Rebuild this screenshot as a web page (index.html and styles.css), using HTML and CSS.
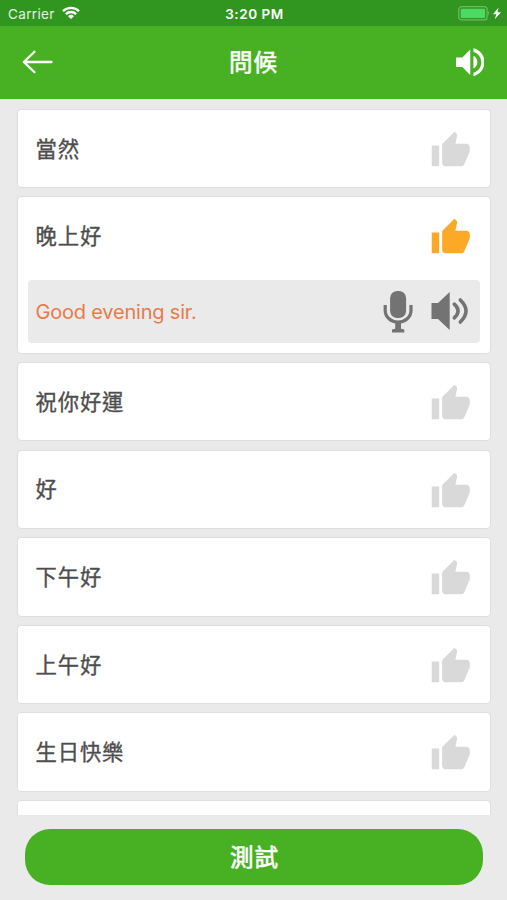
FILE: index.html
```html
<!DOCTYPE html>
<html lang="zh-Hant">
<head>
<meta charset="utf-8">
<meta name="viewport" content="width=device-width, initial-scale=1">
<title>問候</title>
<link rel="stylesheet" href="styles.css">
</head>
<body>
<svg class="defs" aria-hidden="true">
  <symbol id="thumb" viewBox="0 0 24 24"><path d="M1 21h4.300V9H1v12zm22-11c0-1.100-.9-2-2-2h-6.310l.95-4.570.03-.32c0-.41-.17-.79-.44-1.060L14.170 1 7.590 7.590C7.220 7.950 7 8.450 7 9v10c0 1.100.9 2 2 2h9c.83 0 1.540-.5 1.840-1.220l3.020-7.050c.09-.23.14-.47.14-.73z"/></symbol>
</svg>
<div class="screen">
  <div class="status">
    <div class="status-left">
      <span class="carrier">Carrier</span>
      <svg class="wifi" viewBox="0 0 18 13"><g fill="none" stroke="#fff" stroke-width="2.300"><path d="M1 5.200a11.500 11.500 0 0 1 16 0"/><path d="M3.900 8.100a7.300 7.300 0 0 1 10.200 0"/></g><path fill="#fff" d="M6 10.200a4.400 4.400 0 0 1 6 0L9 13z"/></svg>
    </div>
    <span class="clock">3:20 PM</span>
    <div class="status-right">
      <svg class="battery" viewBox="0 0 44 16"><rect x=".7" y="1.700" width="28.400" height="13.200" rx="3" fill="none" stroke="#72b967" stroke-width="1.200"/><rect x="2.700" y="3.700" width="24.400" height="9.200" rx="1.200" fill="#4cd964"/><path d="M30.200 6q2 2.300 0 4.600z" fill="#72b967"/><path d="M40.600 2.600 35 9.300h3.300L36.800 14.200l6.200-7h-3.500z" fill="#fff"/></svg>
    </div>
  </div>
  <header class="header">
    <svg class="back" viewBox="0 0 32 24"><path d="M12.500 1.700 1.900 12l10.600 10.300M1.900 12h27.600" fill="none" stroke="#fff" stroke-width="2.300" stroke-linecap="round" stroke-linejoin="round"/></svg>
    <h1 class="title">問候</h1>
    <svg class="speaker" viewBox="3 3 18 18"><path fill="#fff" d="M3 9v6h4l5 5V4L7 9H3zm13.500 3c0-1.770-1.020-3.290-2.500-4.030v8.050c1.480-.73 2.500-2.250 2.500-4.020zM14 3.230v2.060c2.890.86 5 3.540 5 6.710s-2.110 5.850-5 6.710v2.060c4.010-.91 7-4.490 7-8.770s-2.990-7.860-7-8.770z"/></svg>
  </header>
  <main class="list">
    <section class="card"><div class="row"><span class="phrase">當然</span><svg class="thumb"><use href="#thumb"/></svg></div></section>
    <section class="card">
      <div class="row"><span class="phrase">晚上好</span><svg class="thumb active"><use href="#thumb"/></svg></div>
      <div class="translation">
        <span class="english">Good evening sir.</span>
        <svg class="mic" viewBox="0 0 30 43"><rect x="7.100" y="1" width="16" height="27" rx="7.200" fill="#737373"/><path d="M2.200 15v5.500a12.900 11.600 0 0 0 25.800 0V15" fill="none" stroke="#737373" stroke-width="3.200"/><path fill="#737373" d="M12.200 32h5.800v6.800l3.300.6v3H9v-3l3.200-.6z"/></svg>
        <svg class="sound" viewBox="0 0 37 40"><path fill="#737373" d="M.5 12H7L18.700 1v38L7 28H.5z"/><g fill="none" stroke="#737373" stroke-width="3.600" stroke-linecap="round"><path d="M23.300 13.200q7.600 6.800 0 13.600"/><path d="M29.300 9q11.400 11 0 22"/></g></svg>
      </div>
    </section>
    <section class="card"><div class="row"><span class="phrase">祝你好運</span><svg class="thumb"><use href="#thumb"/></svg></div></section>
    <section class="card"><div class="row"><span class="phrase">好</span><svg class="thumb"><use href="#thumb"/></svg></div></section>
    <section class="card"><div class="row"><span class="phrase">下午好</span><svg class="thumb"><use href="#thumb"/></svg></div></section>
    <section class="card"><div class="row"><span class="phrase">上午好</span><svg class="thumb"><use href="#thumb"/></svg></div></section>
    <section class="card"><div class="row"><span class="phrase">生日快樂</span><svg class="thumb"><use href="#thumb"/></svg></div></section>
    <section class="card"><div class="row"></div></section>
  </main>
  <footer class="footer"><button class="test" type="button">測試</button></footer>
</div>
</body>
</html>
```
FILE: styles.css
```css
* { box-sizing: border-box; }

body {
  margin: 0;
  font-family: Inter, "Noto Sans CJK TC", sans-serif;
  background: #eaeaea;
}

.defs { display: none; }
svg { display: block; flex: none; }

.screen {
  height: 900px;
  display: flex;
  flex-direction: column;
  overflow: hidden;
}

.status {
  flex: none;
  height: 25.5px;
  display: grid;
  grid-template-columns: 1fr auto 1fr;
  align-items: center;
  padding: 2px 5px 0 8px;
  background: #31961f;
  color: #fff;
  font-size: 13px;
}

.status-left { display: flex; align-items: center; gap: 7px; }
.carrier { color: #e4f2e1; font-size: 13.5px; letter-spacing: .35px; }
.wifi { width: 18px; height: 13px; margin-top: -2px; }
.clock { font-weight: 600; font-size: 13.5px; letter-spacing: .55px; margin-right: 1px; }
.status-right { display: flex; justify-content: flex-end; }
.battery { width: 44px; height: 16px; margin-top: -2px; }

.header {
  flex: none;
  height: 73px;
  display: grid;
  grid-template-columns: 1fr auto 1fr;
  align-items: center;
  padding: 0 23px 0 21.5px;
  background: #48b023;
  color: #fff;
}

.back { width: 32px; height: 24px; }
.title { margin: 0; font-size: 23.5px; letter-spacing: 1px; line-height: 36px; font-weight: 400; -webkit-text-stroke: .6px #fff; padding-left: 1.5px; padding-top: 1px; }
.speaker { width: 28.5px; height: 28.5px; justify-self: end; }

.list {
  flex: none;
  height: 716.5px;
  overflow: hidden;
  padding: 10.3px 16px 0 17px;
  display: flex;
  flex-direction: column;
  gap: 8.1px;
}

.card {
  flex: none;
  background: #fff;
  border: 1px solid #dedede;
  border-radius: 4px;
}

.row {
  height: 77.5px;
  display: flex;
  align-items: center;
  justify-content: space-between;
  padding: 0 19px 0 17.5px;
}

.phrase {
  font-size: 21.3px;
  letter-spacing: .9px;
  line-height: 32px;
  color: #4d4d4d;
  -webkit-text-stroke: .35px #4d4d4d;
}

.thumb { width: 41.5px; height: 41.5px; fill: #d9d9d9; margin: 4px 0 0; }
.thumb.active { fill: #fda928; }

.translation {
  height: 63px;
  margin: 5px 10px 10px;
  padding: 0 12px 0 7.5px;
  display: flex;
  align-items: center;
  background: #eaeaea;
  border-radius: 4px;
}

.english { flex: 1; color: #e67c4c; font-size: 20px; letter-spacing: -.2px; line-height: 28px; padding-top: 1px; }
.mic { width: 30px; height: 43px; margin-right: 18px; }
.sound { width: 37px; height: 40px; }

.footer { flex: none; padding: 14px 24px 0 25px; }

.test {
  display: block;
  width: 100%;
  height: 56px;
  border: 0;
  border-radius: 25px;
  background: #48b023;
  color: #fff;
  font: 400 23.5px/36px Inter, "Noto Sans CJK TC", sans-serif;
  letter-spacing: 1px;
  padding: 1px 0 0 1px;
  -webkit-text-stroke: .6px #fff;
}
```
